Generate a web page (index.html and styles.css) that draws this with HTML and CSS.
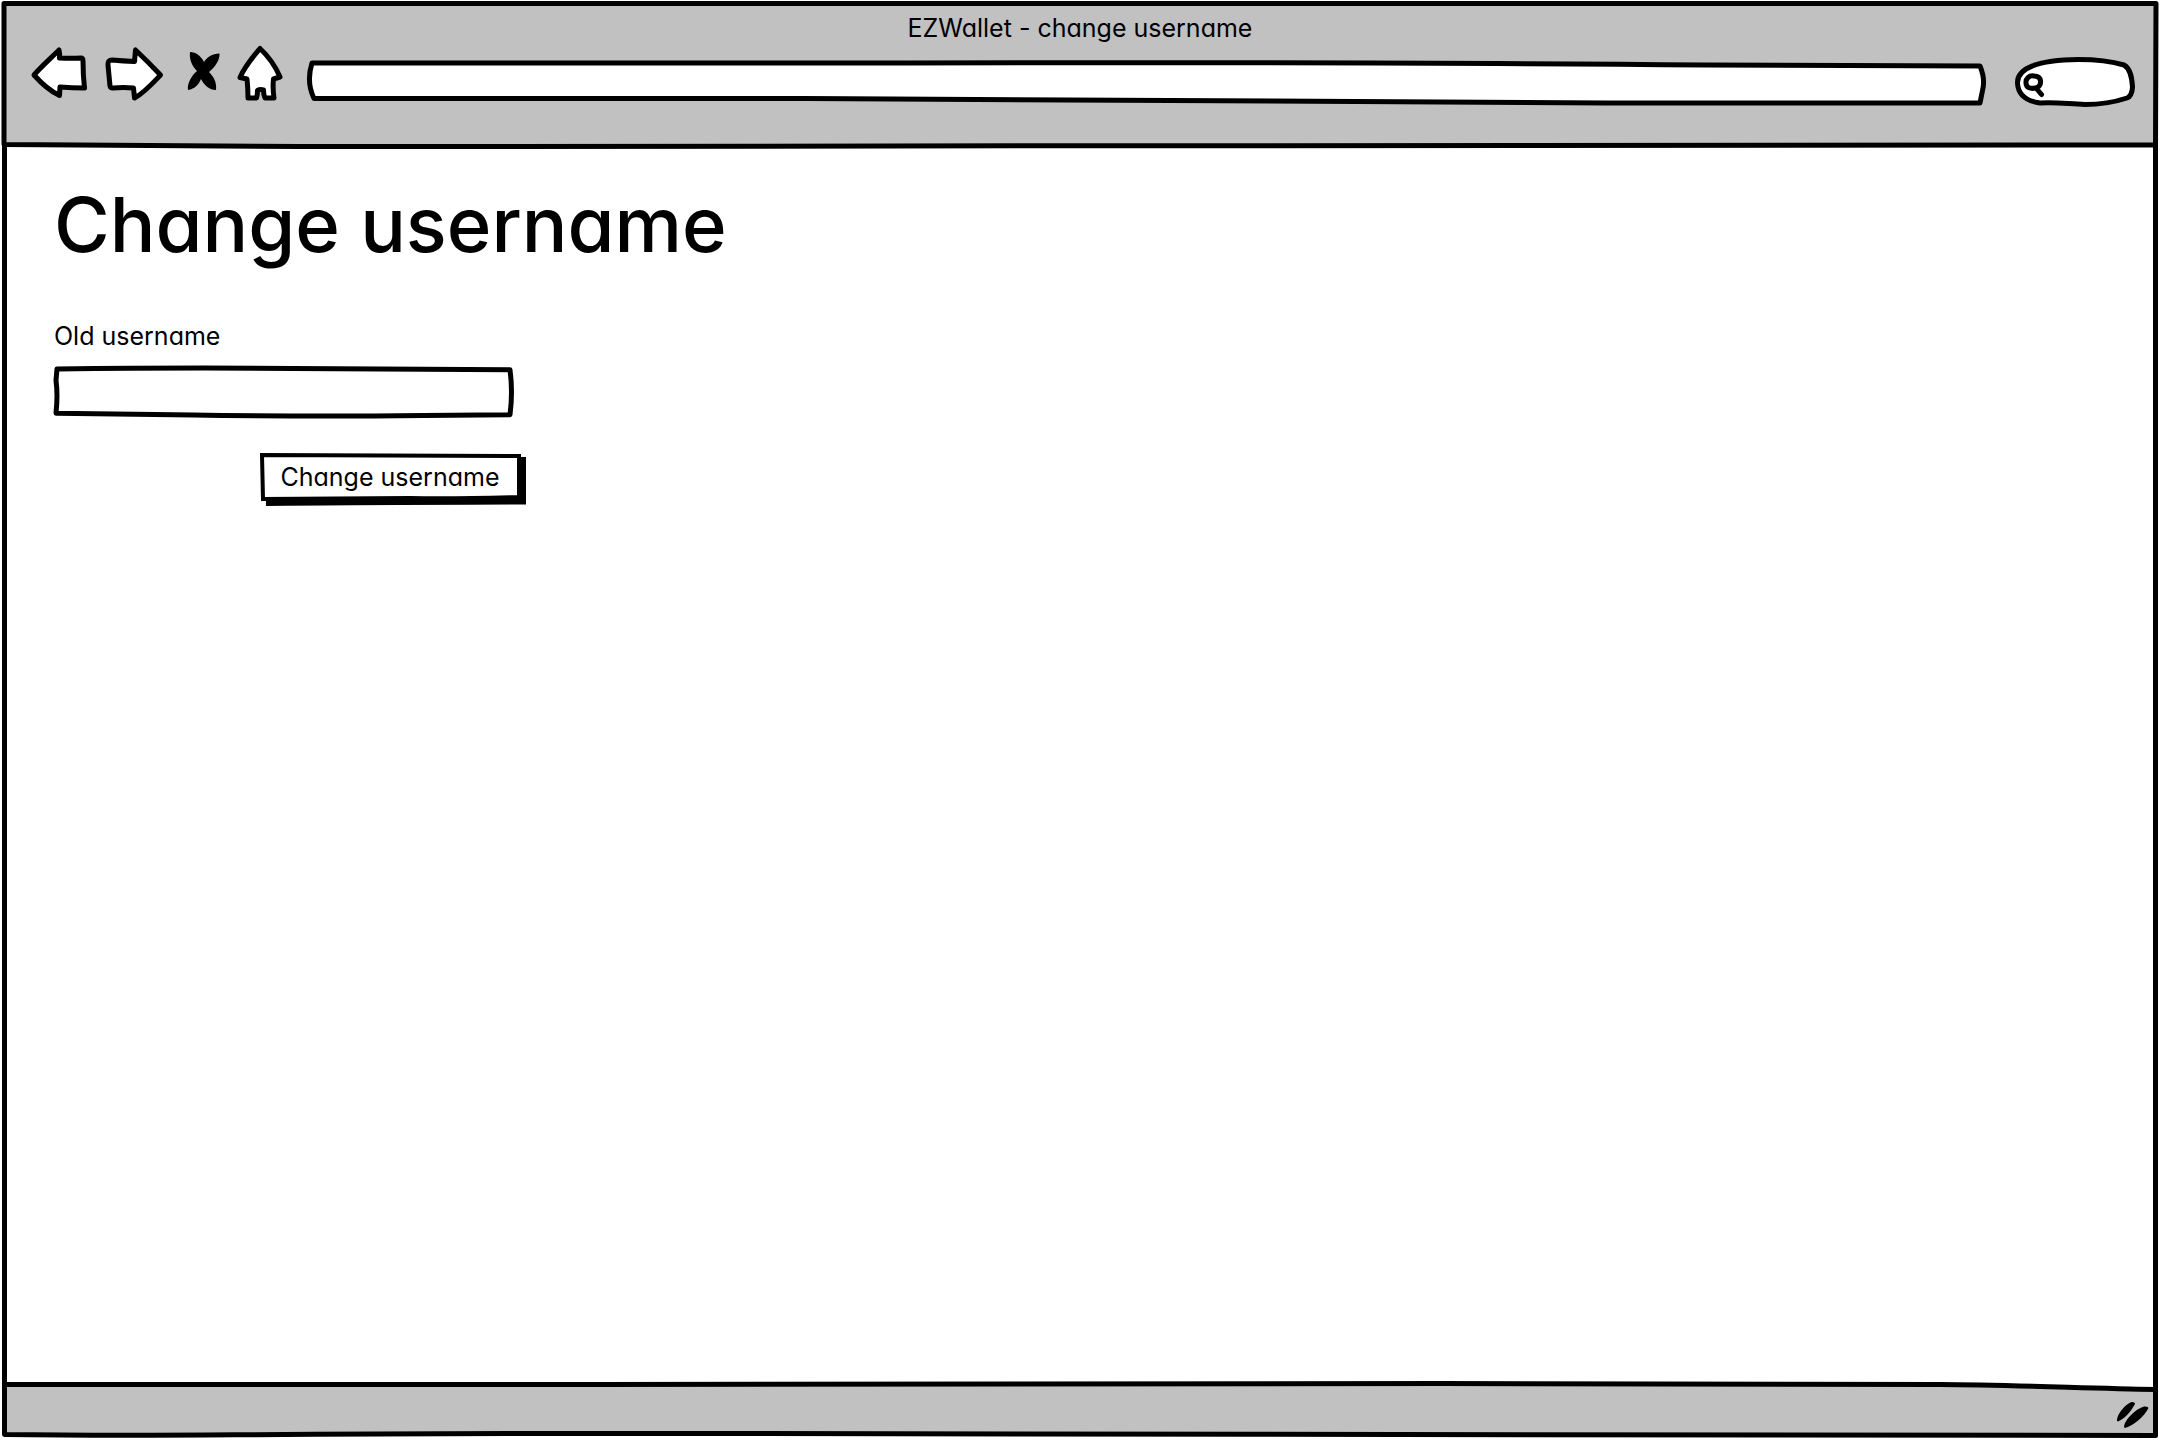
FILE: index.html
```html
<!DOCTYPE html>
<html lang="en">
<head>
<meta charset="utf-8">
<meta name="viewport" content="width=device-width, initial-scale=1">
<title>EZWallet - change username</title>
<link rel="stylesheet" href="styles.css">
</head>
<body>
<div class="window">
  <header class="chrome">
    <svg class="sketch" viewBox="0 0 2160 148" preserveAspectRatio="none" aria-hidden="true">
      <path class="panel" d="M4 3.500 L2156 3.500 L2155.500 145 C1900 144.500 1500 146 1080 145.800 S500 147 300 146.500 S100 145 4 144.500 Z"/>
    </svg>
    <p class="window-title">EZWallet - change username</p>
    <div class="toolbar">
      <nav class="nav" aria-label="Browser">
        <button class="nav-button" type="button" aria-label="Back">
          <svg width="60" height="60" viewBox="30 44 60 60"><path class="shape" d="M34 75 C41 67 50 59 59 50 Q60 54 59.500 58 Q70 58.500 81 58 Q83 58 83 61 Q83 75 84.500 88 Q72 88 60 87 L59.500 95.500 C50 91 42 84 34 75 Z"/></svg>
        </button>
        <button class="nav-button" type="button" aria-label="Forward">
          <svg width="60" height="60" viewBox="104 44 60 60"><path class="shape" d="M160.500 75 C152 66 144 58 135.500 50 Q135 56 134.500 61.500 Q123 61 112 60 Q107.500 60 108 65 L110 86 Q110.500 88.500 113 88 Q123 87 133.500 88 L134.500 98 C144 93 152 84 160.500 75 Z"/></svg>
        </button>
        <button class="nav-button" type="button" aria-label="Stop">
          <svg width="44" height="60" viewBox="178 44 44 60"><path class="ink" d="M190 52 C196 52 201 56 204 62 C207 57 212 54 219.500 53.500 C220 60 215 67 209 72 C214 77 217 83 216 90 C209 90 204 85 201 79 C199 84 195 89 188 90 C187 84 191 76 197 71 C192 66 189 59 190 52 Z"/></svg>
        </button>
        <button class="nav-button" type="button" aria-label="Home">
          <svg width="48" height="60" viewBox="236 44 48 60"><path class="shape" d="M260 48.500 C267 55 275 65 280 77 L273.500 79 Q272.500 88 274 98 L265 98 Q263.500 95 263.500 90 Q260 89 257.500 90.500 Q257.500 95 256.500 98 L248 98 Q248 88 247 79 L240 77.500 C245 66 252 58 260 48.500 Z"/></svg>
        </button>
      </nav>
      <div class="field address">
        <svg class="sketch" viewBox="0 0 1680 46" preserveAspectRatio="none" aria-hidden="true">
          <path class="shape" d="M6 3 L600 3 Q1100 2 1400 5 L1674 6 Q1679 18 1677 28 L1674 43 L1300 43 C900 43 700 40 500 38.500 L8 38.500 Q0 22 6 3 Z"/>
        </svg>
        <input class="input" type="text" aria-label="Address">
      </div>
      <div class="field search">
        <svg class="sketch" viewBox="2014 56 122 52" preserveAspectRatio="none" aria-hidden="true">
          <path class="shape" d="M2017.500 83 C2017 68 2038 60 2078 59.500 C2100 59.500 2114 62 2124 65 C2131 69 2132 79 2132.500 87 Q2132 96 2127 98 C2115 102 2103 104.500 2085 104.500 C2068 104 2057 102 2040 103 C2026 101 2018 94 2017.500 83 Z"/>
          <path class="lens" d="M2034 76 C2029 75 2025.500 79 2026 83 C2026 88 2031 89 2035 88 C2039 88 2041 84 2040.500 81 C2040 77 2037 76 2034 76 M2036 88 L2041.500 94.500"/>
        </svg>
        <input class="input" type="search" aria-label="Search">
      </div>
    </div>
  </header>

  <main class="content">
    <h1 class="heading">Change username</h1>
    <form class="form">
      <label class="label" for="old-username">Old username</label>
      <div class="field username">
        <svg class="sketch" viewBox="0 0 462 54" preserveAspectRatio="none" aria-hidden="true">
          <path class="shape" d="M3 3 Q130 1.500 240 2.500 T458 4 Q461 27 458 50.500 Q240 53 140 51 L2 49 Q4 30 2 15 Z"/>
        </svg>
        <input class="input" id="old-username" name="old-username" type="text">
      </div>
      <button class="submit" type="submit">
        <svg class="sketch" viewBox="0 0 266 54" preserveAspectRatio="none" aria-hidden="true">
          <path class="ink" d="M6 40 L6 54 Q90 53 266 52.500 L266 5 L256 5 Z"/>
          <path class="outline" d="M2 3 L259 4 L259 45 Q190 47 150 46 L3 47 Z"/>
        </svg>
        <span class="submit-text">Change username</span>
      </button>
    </form>
  </main>

  <footer class="status">
    <svg class="sketch" viewBox="0 0 2160 60" preserveAspectRatio="none" aria-hidden="true">
      <path class="panel" d="M4.500 4.500 C120 6 300 6 600 4.500 S1500 3 1940 4.500 C2010 5 2080 8 2155.500 9.500 L2155.500 55.500 C1600 55 1200 54 700 53.500 S200 57 4.500 54.500 Z"/>
    </svg>
    <svg class="grip" width="34" height="30" viewBox="2115 1400 34 30" aria-hidden="true"><path class="ink" d="M2117 1421 C2117 1413 2127 1403 2132 1402 Q2135 1402 2135 1404 C2131 1411 2126 1418 2118 1421.500 Z M2124 1427 C2125 1418 2138 1408 2144 1406.500 Q2148 1406 2148.500 1408 C2144 1417 2134 1425 2125 1428 Z"/></svg>
  </footer>
</div>
</body>
</html>
```
FILE: styles.css
```css
* {
  box-sizing: border-box;
}

body {
  margin: 0;
  background: #fff;
  color: #000;
  font-family: Inter, "Noto Sans", sans-serif;
  font-feature-settings: "cv11";
  font-size: 25px;
  line-height: 32px;
}

.window {
  display: flex;
  flex-direction: column;
  min-height: 100vh;
}

/* Hand-drawn outlines stretch with the box they sit behind */
.sketch {
  position: absolute;
  inset: 0;
  width: 100%;
  height: 100%;
  overflow: visible;
}

.panel,
.shape,
.outline,
.lens {
  stroke: #000;
  stroke-width: 5px;
  stroke-linejoin: round;
  stroke-linecap: round;
  vector-effect: non-scaling-stroke;
}

.panel {
  fill: #c1c1c1;
}

.shape,
.outline {
  fill: #fff;
}

.outline {
  stroke-width: 4px;
  stroke-linejoin: miter;
}

.lens {
  fill: none;
}

.ink {
  fill: #000;
}

.chrome {
  position: relative;
  height: 148px;
  padding-top: 12px;
}

.window-title {
  position: relative;
  margin: 0;
  text-align: center;
}

.toolbar {
  position: relative;
  display: flex;
  align-items: flex-start;
  padding: 0 24px 0 30px;
}

.nav {
  display: flex;
  gap: 14px;
  margin-right: 22px;
}

.nav-button {
  display: flex;
  padding: 0;
  border: 0;
  background: none;
}

.field {
  position: relative;
}

.address {
  flex: 1;
  height: 46px;
  margin: 16px 28px 0 0;
}

.search {
  width: 122px;
  height: 52px;
  margin-top: 12px;
}

.input {
  position: relative;
  width: 100%;
  height: 100%;
  padding: 0 12px;
  border: 0;
  background: none;
  font: inherit;
  outline: 0;
  appearance: none;
}

.search .input {
  padding-left: 32px;
}

/* The side lines run in under the header and the status bar */
.content {
  flex: 1;
  margin: -4px 2px -10px;
  padding: 32px 47px;
  border: solid #000;
  border-width: 0 5px;
}

.heading {
  margin: 0 0 44px;
  font-size: 76px;
  font-weight: 500;
  line-height: 96px;
}

.form {
  display: grid;
  width: 472px;
}

.label {
  margin: 4px 0 14px;
}

.username {
  width: 460px;
  height: 52px;
}

.submit {
  position: relative;
  justify-self: end;
  width: 266px;
  height: 54px;
  margin-top: 34px;
  padding: 0 6px 4px 0;
  border: 0;
  background: none;
  color: inherit;
  font: inherit;
  font-feature-settings: inherit;
}

.submit-text {
  position: relative;
}

.status {
  position: relative;
  display: flex;
  justify-content: flex-end;
  align-items: center;
  height: 60px;
  padding: 10px 11px 0 0;
}

.grip {
  position: relative;
}
```
